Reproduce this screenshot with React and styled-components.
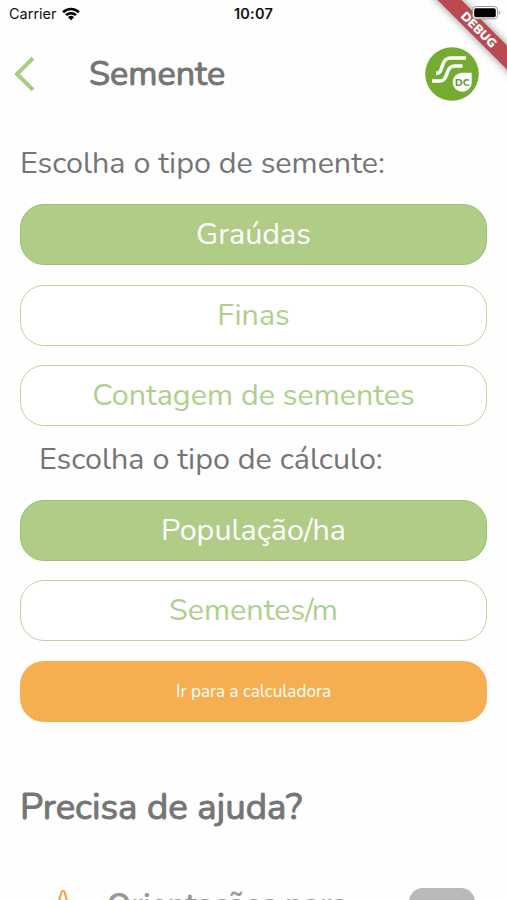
import * as React from 'react';
import styled, { createGlobalStyle } from 'styled-components';

const seedTypes = ['Graúdas', 'Finas', 'Contagem de sementes']
const calcTypes = ['População/ha', 'Sementes/m']

function WifiIcon() {
  return <svg width="18" height="14" viewBox="0 0 18 14">
    <path d="M0.2 4.3a12.4 12.4 0 0 1 17.6 0l-1.8 1.9a9.9 9.9 0 0 0-14 0z" />
    <path d="M3.1 7.3a8.4 8.4 0 0 1 11.8 0L13.1 9.1a5.9 5.9 0 0 0-8.2 0z" />
    <path d="M6 10.2a4.3 4.3 0 0 1 6 0l-3 3.1z" />
  </svg>
}

function BatteryIcon() {
  return <svg width="29" height="14" viewBox="0 0 29 14">
    <rect x="0.5" y="0.5" width="25" height="12.4" rx="3.4" fill="#fff" stroke="#9a9a9a" />
    <rect x="2.2" y="2.2" width="21.6" height="9" rx="1.8" fill="#000" />
    <path d="M26.8 4.4c1.8 .8 1.8 3.8 0 4.6z" fill="#999" />
  </svg>
}

function BackIcon() {
  return <svg width="22" height="36" viewBox="0 0 22 36" fill="none">
    <path d="M20 2.2L4 18l16 15.8" stroke="#a9cc82" strokeWidth="4" />
  </svg>
}

function Logo() {
  return <svg width="54" height="54" viewBox="0 0 54 54">
    <circle cx="27" cy="27" r="26.8" fill="#74ab31" />
    <g fill="none" stroke="#fff" strokeWidth="3.5">
      <path d="M11 26.2h1.6c2 0 2.6-1.3 3.6-4l1.8-5.2c1.6-4.400 3.400-5.900 7.800-5.900h15.200" />
      <path d="M7 34h8c3.600 0 4.800-1.700 6-5l1.600-4.200c1.500-4.300 3.200-5.800 7.400-5.800h7.600" />
    </g>
    <path d="M37.2 25.700h9.500v9.500a9.500 9.500 0 1 1-9.500-9.500z" fill="#fff" />
    <text x="37.2" y="38.900" textAnchor="middle" fontSize="10" fontWeight="800" fill="#5d9a2f">DC</text>
  </svg>
}

export default function SeedScreen() {
  let [seed, setSeed] = React.useState('Graúdas')
  let [calc, setCalc] = React.useState('População/ha')

  const renderOptions = (options, selected, onSelect) => {
    return options.map((label) => {
      return <OptionButton key={label} $active={label === selected} onClick={() => onSelect(label)}>
        {label}
      </OptionButton>
    })
  }

  return <Screen>
    <GlobalStyle />
    <Ribbon>DEBUG</Ribbon>
    <StatusBar>
      <Carrier>Carrier <WifiIcon /></Carrier>
      <Clock>10:07</Clock>
      <Battery><BatteryIcon /></Battery>
    </StatusBar>

    <Header>
      <BackButton aria-label="Voltar"><BackIcon /></BackButton>
      <Title>Semente</Title>
      <Logo />
    </Header>

    <Content>
      <Label>Escolha o tipo de semente:</Label>
      <Options>{renderOptions(seedTypes, seed, setSeed)}</Options>
      <Label $nested>Escolha o tipo de cálculo:</Label>
      <Options>
        {renderOptions(calcTypes, calc, setCalc)}
        <SubmitButton>Ir para a calculadora</SubmitButton>
      </Options>
      <HelpTitle>Precisa de ajuda?</HelpTitle>
      <HelpRow>
        <svg width="28" height="40" viewBox="0 0 28 40" fill="none">
          <path d="M4 34L12 5.5q2-5.500 4 0L24 34" stroke="#f0a744" strokeWidth="2.2" />
        </svg>
        <HelpText>Orientações para</HelpText>
        <HelpAction />
      </HelpRow>
    </Content>
  </Screen>
}

const GlobalStyle = createGlobalStyle`
  body {
    margin: 0;
    overflow: hidden;
    background: #fff;
  }
  button {
    font-family: inherit;
    cursor: pointer;
  }
`

const Screen = styled.div`
  position: relative;
  width: 507px;
  height: 900px;
  overflow: hidden;
  background: #fefefe;
  color: #757575;
  font-family: Nunito, "Open Sans", sans-serif;
`

const StatusBar = styled.div`
  position: relative;
  z-index: 2;
  display: grid;
  grid-template-columns: 1fr auto 1fr;
  align-items: center;
  height: 27px;
  padding: 0 6px 0 9px;
  color: #111;
  font-family: Inter, sans-serif;
  font-size: 14.5px;
`

const Carrier = styled.div`
  display: flex;
  align-items: center;
  gap: 5px;
`

const Clock = styled.div`
  padding-right: 3px;
  font-weight: 600;
  letter-spacing: .2px;
`

const Battery = styled.div`
  display: flex;
  justify-content: flex-end;
  padding-bottom: 2px;
`

const Ribbon = styled.div`
  position: absolute;
  z-index: 1;
  top: 21px;
  right: -52px;
  width: 160px;
  height: 17px;
  transform: rotate(45deg);
  background: #b94a50;
  box-shadow: 0 0 9px rgba(0, 0, 0, .45);
  color: #fff;
  font-size: 12.5px;
  font-weight: 900;
  line-height: 18px;
  text-align: center;
`

const Header = styled.header`
  display: flex;
  align-items: center;
  height: 94px;
  padding: 0 28px 0 13px;
`

const BackButton = styled.button`
  display: flex;
  width: 76px;
  padding: 0;
  border: 0;
  background: none;
`

const Title = styled.h1`
  flex: 1;
  margin: 0;
  font-size: 34.2px;
  font-weight: 400;
  line-height: 44px;
  -webkit-text-stroke: 1px;
`

const Content = styled.main`
  padding: 20px 20px 0;
`

const Label = styled.div`
  height: ${({ $nested }) => $nested ? '73.5px' : '63px'};
  padding-left: ${({ $nested }) => $nested ? '19px' : '0'};
  font-size: 30.5px;
  line-height: ${({ $nested }) => $nested ? '66px' : '45px'};
  white-space: nowrap;
`

const Options = styled.div`
  display: flex;
  flex-direction: column;
  gap: 19.5px;
`

const OptionButton = styled.button`
  height: 61px;
  padding: 0 0 1px;
  border: 1.5px solid ${({ $active }) => $active ? '#9cc070' : '#b9d79a'};
  border-radius: 24px;
  background: ${({ $active }) => $active ? '#afcd87' : '#fff'};
  color: ${({ $active }) => $active ? '#fff' : '#afcf8c'};
  font-size: 30.5px;
`

const SubmitButton = styled.button`
  height: 61px;
  border: 0;
  border-radius: 24px;
  background: #f6af50;
  color: #fff;
  font-size: 17.1px;
`

const HelpTitle = styled.h2`
  margin: 60px 0 0;
  font-size: 36.6px;
  font-weight: 400;
  line-height: 50px;
  -webkit-text-stroke: 1px;
`

const HelpRow = styled.div`
  display: flex;
  align-items: flex-start;
  margin-top: 56px;
  padding: 0 12px 0 29px;
`

const HelpText = styled.div`
  flex: 1;
  padding-left: 30px;
  color: #999;
  font-size: 30.5px;
  font-weight: 700;
  line-height: 32px;
  white-space: nowrap;
`

const HelpAction = styled.button`
  width: 66px;
  height: 60px;
  border: 0;
  border-radius: 14px;
  background: #b9b9b9;
`
